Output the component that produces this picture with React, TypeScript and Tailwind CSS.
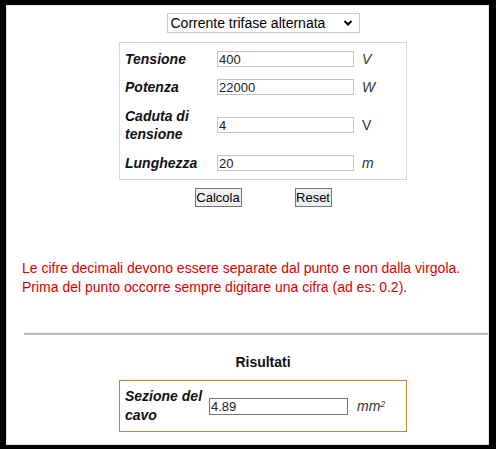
import React from "react";

const rows = [
  { label: "Tensione", value: "400", unit: "V", italic: true },
  { label: "Potenza", value: "22000", unit: "W", italic: true },
  { label: "Caduta di tensione", value: "4", unit: "V", italic: false },
  { label: "Lunghezza", value: "20", unit: "m", italic: true },
];

export default function App() {
  return (
    <div className="w-[496px] h-[449px] bg-black pt-[5px] pl-[6px] pr-[7px] pb-[4px] overflow-hidden leading-[18px]" style={{ fontFamily: '"Liberation Sans", Arial, sans-serif' }}>
      <div className="w-full h-full bg-white border border-[#e4e4e4] overflow-hidden">
        <div className="ml-[17px] w-[478px] flex flex-col items-center">
          <div className="mt-[7px] w-[193px] h-[20px] border border-[#c8c8c8] bg-white flex items-center justify-between pl-[3px] pr-[6px] text-[14px] leading-[18px] text-black">
            <span>Corrente trifase alternata</span>
            <svg width="10" height="8" viewBox="0 0 10 8"><path d="M1.5 2 L5 5.5 L8.5 2" fill="none" stroke="#000" strokeWidth="2" /></svg>
          </div>
          <div className="mt-[9px] w-[288px] border border-[#d6d6d6] py-[2px] pl-[5px]">
            {rows.map((r, i) => (
              <div key={r.label} className={`flex items-center ${i === 2 ? "py-[6px]" : "py-[5px]"}`}>
                <div className="w-[92px] pr-[6px] text-[14px] leading-[18px] font-bold italic text-[#111]">{r.label}</div>
                <input readOnly value={r.value} className="w-[137px] h-[16px] border border-[#c4c4c4] px-[1px] text-[13px] leading-[14px] text-[#222] outline-none" style={{ fontFamily: '"Liberation Sans", Arial, sans-serif' }} />
                <span className={`ml-[8px] text-[14px] leading-[18px] text-[#333] ${r.italic ? "italic" : ""}`}>{r.unit}</span>
              </div>
            ))}
          </div>
          <div className="mt-[8px] flex gap-[53px]">
            <button className="w-[47px] h-[19px] border border-[#767676] bg-[#efefef] text-[13px] text-black leading-none">Calcola</button>
            <button className="w-[37px] h-[19px] border border-[#767676] bg-[#efefef] text-[13px] text-black leading-none">Reset</button>
          </div>
        </div>
        <div className="mt-[52px] ml-[15px] text-[14px] leading-[19px] text-[#dd0000]">
          <div>Le cifre decimali devono essere separate dal punto e non dalla virgola.</div>
          <div>Prima del punto occorre sempre digitare una cifra (ad es: 0.2).</div>
        </div>
        <div className="ml-[17px] w-[478px] flex flex-col items-center">
          <div className="mt-[35px] w-full border-t border-[#ededed] border-b-2 border-b-[#bdbdbd] h-[3px]" />
          <div className="mt-[18px] text-[14px] leading-[18px] font-bold text-[#111]">Risultati</div>
          <div className="mt-[9px] w-[288px] h-[52px] border border-[#c0843c] pl-[5px] flex items-center">
            <div className="w-[84px] text-[14px] leading-[19px] font-bold italic text-[#111]">Sezione del cavo</div>
            <input readOnly value="4.89" className="w-[139px] h-[17px] border border-[#767676] px-[1px] text-[13px] leading-[15px] text-[#222] outline-none" style={{ fontFamily: '"Liberation Sans", Arial, sans-serif' }} />
            <span className="ml-[9px] text-[14px] leading-[18px] italic text-[#333]">mm<sup className="text-[9px]">2</sup></span>
          </div>
        </div>
      </div>
    </div>
  );
}
